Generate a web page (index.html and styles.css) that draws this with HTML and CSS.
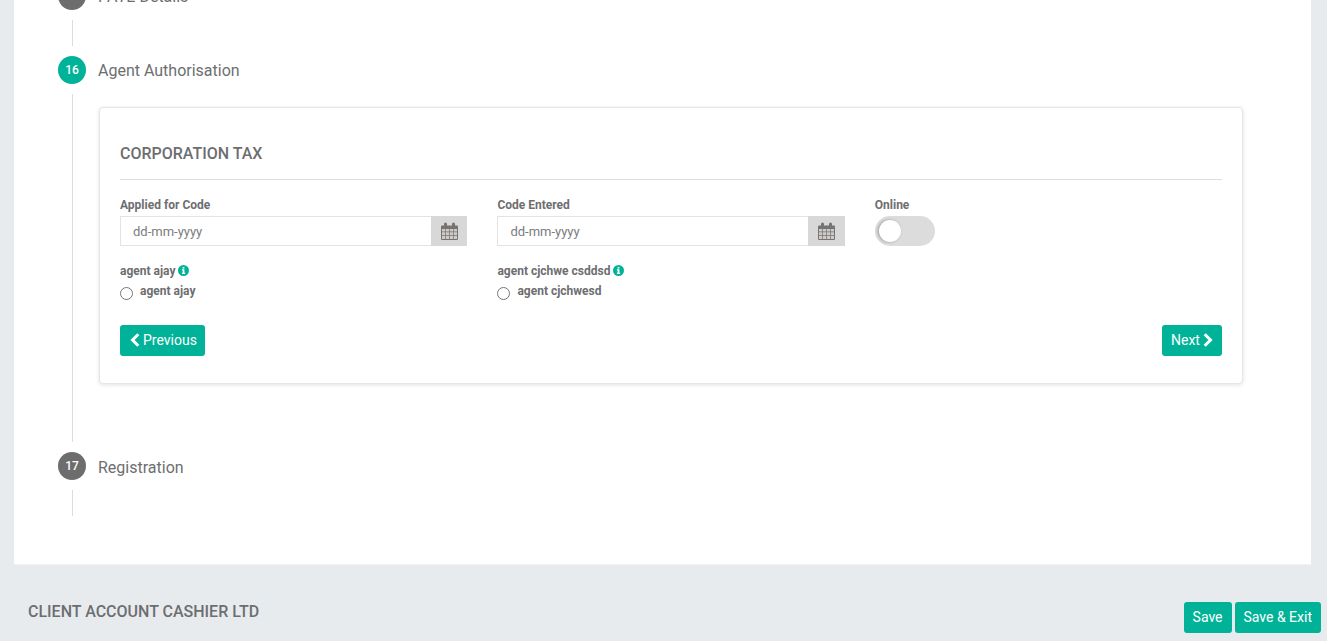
FILE: index.html
```html
<!DOCTYPE html>
<html lang="en">
<head>
<meta charset="utf-8">
<title>Agent Authorisation</title>
<link rel="stylesheet" href="styles.css">
</head>
<body>
<div class="page">
  <main class="panel">
    <section class="step step-first">
      <div class="step-head">
        <span class="badge badge-grey"></span>
        <span class="step-title">PAYE Details</span>
      </div>
      <div class="rail rail-short"></div>
    </section>
    <section class="step step-active">
      <div class="step-head">
        <span class="badge badge-green">16</span>
        <span class="step-title">Agent Authorisation</span>
      </div>
      <div class="step-body">
        <div class="card">
          <h2 class="card-title">CORPORATION TAX</h2>
          <div class="form-grid">
            <div class="field">
              <label class="label">Applied for Code</label>
              <div class="date-input">
                <input class="date-text" type="text" placeholder="dd-mm-yyyy">
                <span class="date-addon">
                  <svg class="cal" viewBox="0 0 17 18" width="17" height="18"><path fill="#747474" d="M1 3.500h2V2a1.500 1.500 0 0 1 3 0v1.500h5V2a1.500 1.500 0 0 1 3 0v1.500h2a1 1 0 0 1 1 1V17a1 1 0 0 1-1 1H1a1 1 0 0 1-1-1V4.500a1 1 0 0 1 1-1z"/><path fill="#cfcac6" d="M1 7h3.300v2.600H1zM5 7h3.200v2.600H5zM8.900 7h3.200v2.600H8.900zM12.800 7H16v2.600h-3.200zM1 10.300h3.300v2.900H1zM5 10.300h3.200v2.900H5zM8.900 10.300h3.200v2.900H8.900zM12.800 10.300H16v2.900h-3.200zM1 13.900h3.300V17H1zM5 13.900h3.200V17H5zM8.900 13.900h3.200V17H8.900zM12.800 13.900H16V17h-3.200z"/></svg>
                </span>
              </div>
            </div>
            <div class="field">
              <label class="label">Code Entered</label>
              <div class="date-input">
                <input class="date-text" type="text" placeholder="dd-mm-yyyy">
                <span class="date-addon">
                  <svg class="cal" viewBox="0 0 17 18" width="17" height="18"><path fill="#747474" d="M1 3.500h2V2a1.500 1.500 0 0 1 3 0v1.500h5V2a1.500 1.500 0 0 1 3 0v1.500h2a1 1 0 0 1 1 1V17a1 1 0 0 1-1 1H1a1 1 0 0 1-1-1V4.500a1 1 0 0 1 1-1z"/><path fill="#cfcac6" d="M1 7h3.300v2.600H1zM5 7h3.200v2.600H5zM8.900 7h3.200v2.600H8.900zM12.800 7H16v2.600h-3.200zM1 10.300h3.300v2.900H1zM5 10.300h3.200v2.900H5zM8.900 10.300h3.200v2.900H8.900zM12.800 10.300H16v2.900h-3.200zM1 13.900h3.300V17H1zM5 13.900h3.200V17H5zM8.900 13.900h3.200V17H8.900zM12.800 13.900H16V17h-3.200z"/></svg>
                </span>
              </div>
            </div>
            <div class="field field-online">
              <label class="label">Online</label>
              <span class="toggle"><span class="knob"></span></span>
            </div>
            <div class="field field-radio">
              <div class="label">agent ajay <svg class="info" viewBox="0 0 11 11" width="11" height="11"><circle cx="5.500" cy="5.500" r="5.500" fill="#00b398"/><path fill="#fff" d="M4.600 1.900h1.800v1.600H4.600zM3.900 4.300h2.500v3.500h.8v1.300H3.900V7.800h.8V5.600h-.8z"/></svg></div>
              <label class="radio-row"><span class="radio"></span><span class="radio-text">agent ajay</span></label>
            </div>
            <div class="field field-radio">
              <div class="label">agent cjchwe csddsd <svg class="info" viewBox="0 0 11 11" width="11" height="11"><circle cx="5.500" cy="5.500" r="5.500" fill="#00b398"/><path fill="#fff" d="M4.600 1.900h1.800v1.600H4.600zM3.900 4.300h2.500v3.500h.8v1.300H3.900V7.800h.8V5.600h-.8z"/></svg></div>
              <label class="radio-row"><span class="radio"></span><span class="radio-text">agent cjchwesd</span></label>
            </div>
          </div>
          <div class="card-actions">
            <button class="btn btn-prev" type="button"><svg class="chev" viewBox="0 0 10 14" width="10" height="14"><path d="M8.300 1.200 2.500 7l5.800 5.800" fill="none" stroke="#fff" stroke-width="3"/></svg> Previous</button>
            <button class="btn btn-next" type="button">Next <svg class="chev" viewBox="0 0 10 14" width="10" height="14"><path d="M1.700 1.200 7.500 7l-5.800 5.800" fill="none" stroke="#fff" stroke-width="3"/></svg></button>
          </div>
        </div>
      </div>
    </section>
    <section class="step step-last">
      <div class="step-head">
        <span class="badge badge-grey">17</span>
        <span class="step-title">Registration</span>
      </div>
      <div class="rail rail-short"></div>
    </section>
  </main>
  <footer class="footer">
    <span class="company">CLIENT ACCOUNT CASHIER LTD</span>
    <div class="footer-actions">
      <button class="btn btn-foot" type="button">Save</button>
      <button class="btn btn-foot" type="button">Save &amp; Exit</button>
    </div>
  </footer>
</div>
</body>
</html>
```
FILE: styles.css
```css
* { box-sizing: border-box; }
html, body { margin: 0; padding: 0; height: 641px; overflow: hidden; }
body {
  background: #e8ebee;
  font-family: Roboto, "Liberation Sans", sans-serif;
  color: #6d6e70;
}
.page { margin-top: -18px; padding-left: 14px; }
.panel {
  width: 1297px;
  height: 582px;
  background: #fff;
  box-shadow: 0 1px 0 #f0f2f4;
  padding-left: 44px;
}
.step-first { height: 74px; }
.step-head { display: flex; align-items: center; height: 28px; }
.badge {
  width: 28px;
  height: 28px;
  border-radius: 50%;
  color: #fff;
  font-size: 12px;
  font-weight: 500;
  display: flex;
  align-items: center;
  justify-content: center;
  flex: none;
  padding-bottom: 1px;
}
.badge-green { background: #00b398; }
.badge-grey { background: #6d6d6d; }
.step-title { margin-left: 12px; padding-top: 1px; font-size: 16px; line-height: 28px; color: #6d6e70; }
.step-last .step-title { padding-top: 3px; }
.rail { width: 1px; background: #dcdcdc; margin-left: 14px; }
.rail-short { height: 26px; margin-top: 10px; }
.step-body {
  margin: 10px 0 10px 14px;
  padding: 13px 0 58px 26px;
  border-left: 1px solid #dcdcdc;
  width: 1171px;
}
.card {
  width: 1144px;
  height: 277px;
  background: #fff;
  border: 1px solid #e6e6e6;
  border-radius: 4px;
  box-shadow: 0 1px 4px rgba(0, 0, 0, 0.12);
  padding: 36px 20px 0;
}
.card-title {
  margin: 0;
  height: 36px;
  font-size: 16px;
  line-height: 19px;
  font-weight: 500;
  color: #6d6e70;
  border-bottom: 1px solid #dedede;
}
.form-grid {
  display: grid;
  grid-template-columns: 347.4px 347.4px 1fr;
  column-gap: 30px;
  margin-top: 18px;
}
.label { display: block; font-size: 12px; line-height: 14px; font-weight: 700; color: #6d6e70; }
.date-input { display: flex; height: 30px; margin-top: 4px; }
.date-text {
  flex: 1;
  min-width: 0;
  height: 30px;
  border: 1px solid #e3e3e3;
  border-right: 0;
  padding: 0 12px;
  font-family: inherit;
  font-size: 13px;
  color: #6d6e70;
  outline: none;
}
.date-text::placeholder { color: #7b7c7e; opacity: 1; }
.date-addon {
  width: 36.6px;
  background: #d8d8d8;
  display: flex;
  align-items: center;
  justify-content: center;
}
.toggle {
  display: block;
  position: relative;
  width: 60px;
  height: 30px;
  margin-top: 4px;
  border-radius: 15px;
  background: #dcdcdc;
}
.knob {
  position: absolute;
  left: 4px;
  top: 4px;
  width: 22px;
  height: 22px;
  border-radius: 50%;
  background: #fff;
  box-shadow: -1px 0 3px rgba(0, 0, 0, 0.3);
}
.field-radio { margin-top: 18px; }
.info { vertical-align: -1px; }
.radio-row { display: flex; margin-top: 6px; height: 20px; }
.radio {
  width: 13px;
  height: 13px;
  margin-top: 3px;
  border: 1px solid #767676;
  border-radius: 50%;
  background: #fff;
}
.radio-text { margin-left: 7px; font-size: 12px; line-height: 14px; font-weight: 700; color: #6d6e70; }
.card-actions { display: flex; justify-content: space-between; margin-top: 21px; }
.btn {
  height: 31px;
  border: 0;
  border-radius: 3px;
  background: #00b398;
  color: #fff;
  font-family: inherit;
  font-size: 14px;
  padding: 0 0 2px;
  display: inline-flex;
  align-items: center;
  justify-content: center;
}
.btn-prev { gap: 3px; width: 85px; justify-content: flex-start; padding-left: 10px; }
.btn-next { gap: 3px; width: 60px; justify-content: flex-start; padding-left: 9px; }
.chev { margin-top: 1px; }
.footer { display: flex; justify-content: space-between; height: 77px; margin-left: -1px; }
.company { font-size: 16px; font-weight: 500; line-height: 19px; margin: 38px 0 0 15px; color: #6d6e70; }
.footer-actions { display: flex; gap: 3px; margin: 38px 6px 0 0; }
.btn-foot { padding: 0 9px 2px; }
```
